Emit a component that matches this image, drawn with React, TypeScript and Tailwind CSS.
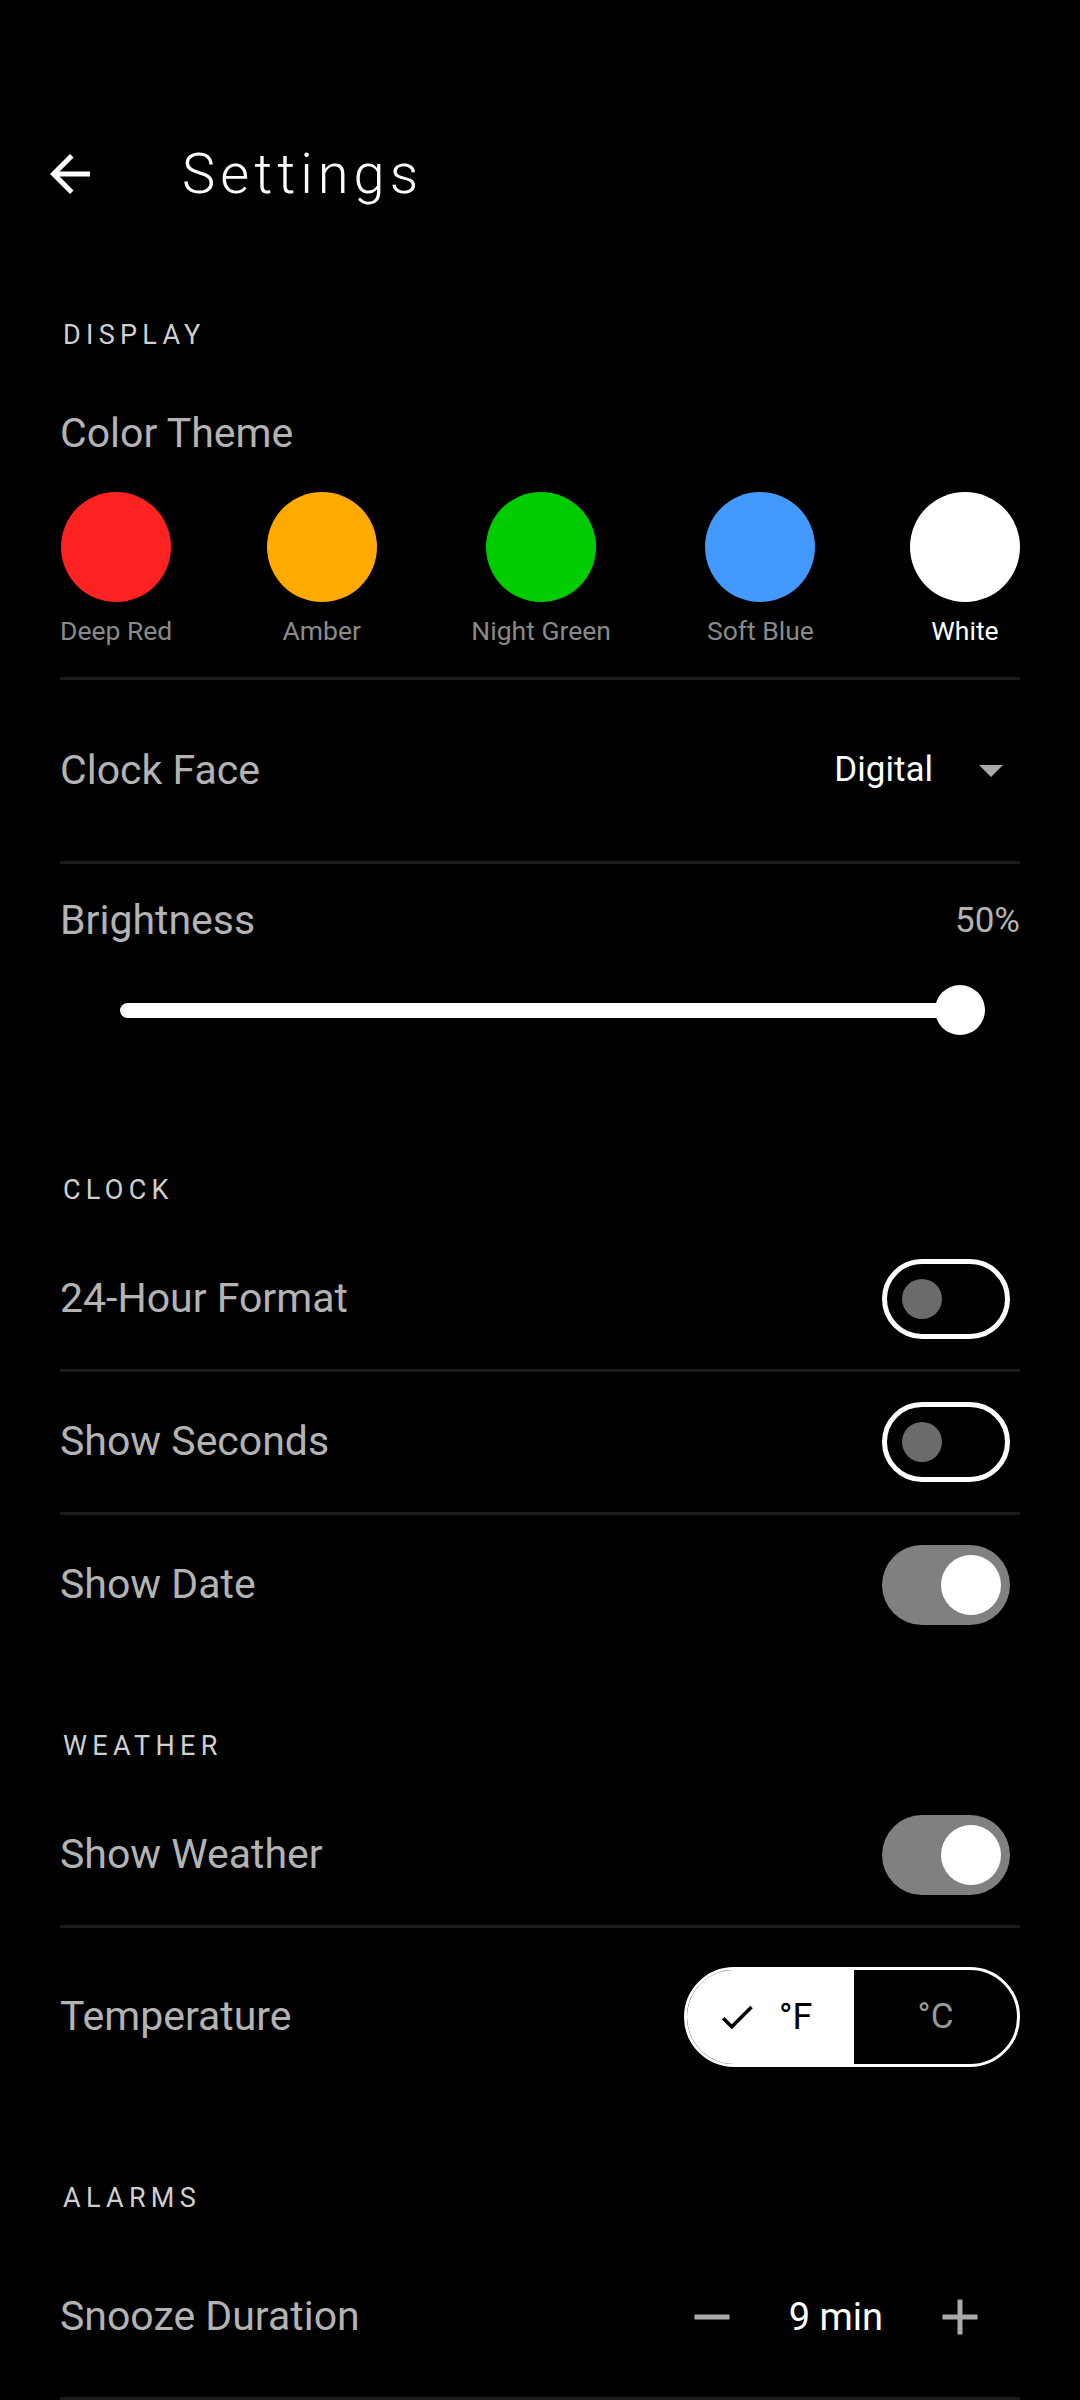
import React from "react";

type Swatch = { name: string; color: string; selected?: boolean };

const swatches: Swatch[] = [
  { name: "Deep Red", color: "bg-[#ff2222]" },
  { name: "Amber", color: "bg-[#ffaa00]" },
  { name: "Night Green", color: "bg-[#00cc00]" },
  { name: "Soft Blue", color: "bg-[#4499ff]" },
  { name: "White", color: "bg-white", selected: true },
];

function Divider() {
  return <div className="h-[3px] bg-[#1b1b1b]" />;
}

function SectionLabel({ text, className }: { text: string; className: string }) {
  return (
    <div className={"h-[40px] flex items-center pl-[3px] text-[27px] tracking-[5.3px] text-[#cfcfcf] " + className}>
      {text}
    </div>
  );
}

function Toggle({ on }: { on: boolean }) {
  if (on) {
    return (
      <div className="w-[128px] h-[80px] mr-[10px] rounded-full bg-[#808080] flex items-center justify-end pr-[9px]">
        <div className="w-[60px] h-[60px] rounded-full bg-white" />
      </div>
    );
  }
  return (
    <div className="w-[128px] h-[80px] mr-[10px] rounded-full border-[5px] border-white flex items-center pl-[15px]">
      <div className="w-[40px] h-[40px] rounded-full bg-[#6b6b6b]" />
    </div>
  );
}

function ToggleRow({ label, on }: { label: string; on: boolean }) {
  return (
    <div className="h-[140px] flex items-center justify-between">
      <span className="text-[41px] text-[#b3b3b3]">{label}</span>
      <Toggle on={on} />
    </div>
  );
}

export default function App() {
  return (
    <div className="min-h-[2400px] bg-black text-white overflow-hidden" style={{ fontFamily: "Roboto, 'Noto Sans', sans-serif" }}>
      {/* header */}
      <div className="mt-[118px] h-[112px] flex items-center pl-[40px]">
        <svg width="60" height="60" viewBox="0 0 24 24" fill="white">
          <path d="M20 11H7.83l5.59-5.59L12 4l-8 8 8 8 1.41-1.41L7.83 13H20v-2z" />
        </svg>
        <h1 className="ml-[82px] text-[56px] font-light tracking-[5px] text-white leading-none">Settings</h1>
      </div>

      <div className="px-[60px]">
        <SectionLabel text="DISPLAY" className="mt-[85px]" />

        <div className="mt-[55px] h-[48px] flex items-center text-[41px] text-[#b3b3b3]">Color Theme</div>

        <div className="mt-[34px] flex justify-between pb-[31px]">
          {swatches.map((s) => (
            <div key={s.name} className="flex flex-col items-center">
              <div className={"w-[110px] h-[110px] rounded-full " + s.color} />
              <span
                className={
                  "mt-[14px] text-[26.5px] leading-[30px] whitespace-nowrap " +
                  (s.selected ? "text-white" : "text-[#8a8a8a]")
                }
              >
                {s.name}
              </span>
            </div>
          ))}
        </div>

        <Divider />

        <div className="h-[181px] flex items-center justify-between">
          <span className="text-[41px] text-[#b3b3b3]">Clock Face</span>
          <div className="flex items-center mr-[17px]">
            <span className="text-[35px] text-white">Digital</span>
            <svg className="ml-[46px]" width="24" height="12" viewBox="0 0 24 12">
              <polygon points="0,0 24,0 12,12" fill="#aaaaaa" />
            </svg>
          </div>
        </div>

        <Divider />

        <div className="mt-[33px] h-[48px] flex items-center justify-between">
          <span className="text-[41px] text-[#b3b3b3]">Brightness</span>
          <span className="text-[35px] text-[#b3b3b3]">50%</span>
        </div>

        <div className="mt-[40px] h-[50px] ml-[60px] mr-[35px] relative flex items-center">
          <div className="h-[15px] w-[calc(100%-25px)] rounded-full bg-white" />
          <div className="absolute right-0 top-0 w-[50px] h-[50px] rounded-full bg-white" />
        </div>

        <SectionLabel text="CLOCK" className="mt-[135px]" />
        <div className="mt-[19px]">
          <ToggleRow label="24-Hour Format" on={false} />
          <Divider />
          <ToggleRow label="Show Seconds" on={false} />
          <Divider />
          <ToggleRow label="Show Date" on={true} />
        </div>

        <SectionLabel text="WEATHER" className="mt-[71px]" />
        <div className="mt-[19px]">
          <ToggleRow label="Show Weather" on={true} />
          <Divider />
          <div className="h-[178px] flex items-center justify-between">
            <span className="text-[41px] text-[#b3b3b3]">Temperature</span>
            <div className="w-[336px] h-[100px] rounded-full border-[3px] border-white overflow-hidden flex">
              <div className="w-[167px] h-full bg-white flex items-center pl-[29px] gap-[21px]">
                <svg width="42" height="42" viewBox="0 0 24 24" fill="black">
                  <path d="M9 16.17L4.83 12l-1.42 1.41L9 19 21 7l-1.41-1.41z" />
                </svg>
                <span className="text-[36px] text-black">°F</span>
              </div>
              <div className="flex-1 h-full flex items-center justify-center">
                <span className="text-[35px] text-[#999999]">°C</span>
              </div>
            </div>
          </div>
        </div>

        <SectionLabel text="ALARMS" className="mt-[72px]" />
        <div className="mt-[19px]">
          <div className="h-[160px] flex items-center justify-between">
            <span className="text-[41px] text-[#b3b3b3]">Snooze Duration</span>
            <div className="flex items-center mr-[30px]">
              <svg width="60" height="60" viewBox="0 0 24 24" fill="#aaaaaa">
                <path d="M19 13H5v-2h14v2z" />
              </svg>
              <span className="mx-[47px] text-[38px] text-white">9 min</span>
              <svg width="60" height="60" viewBox="0 0 24 24" fill="#aaaaaa">
                <path d="M19 13h-6v6h-2v-6H5v-2h6V5h2v6h6v2z" />
              </svg>
            </div>
          </div>
          <Divider />
        </div>
      </div>
    </div>
  );
}
